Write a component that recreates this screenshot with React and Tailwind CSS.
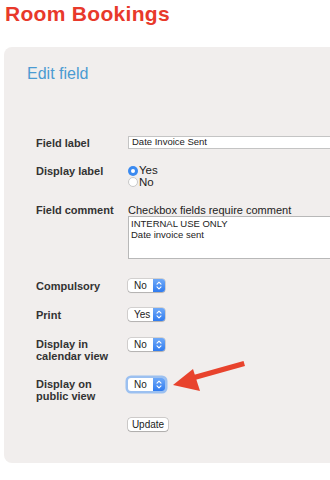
import React from 'react';

function Select({ value, focus }) {
  return (
    <div
      className={`flex h-[13px] w-[37px] overflow-hidden rounded-[3px] bg-white text-[10px] leading-[13px] text-[#222] shadow-[0_0_0_0.5px_rgba(0,0,0,0.25),0_1px_1px_rgba(0,0,0,0.15)] ${
        focus ? 'ring-[2.5px] ring-[#9cc0f0]' : ''
      }`}
    >
      <span className="flex-1 pl-[6px]">{value}</span>
      <span className="flex w-[12px] items-center justify-center bg-gradient-to-b from-[#6fa9f8] to-[#2f7bef]">
        <svg width="6" height="9" viewBox="0 0 6 9" fill="none" stroke="white" strokeWidth="1.1" strokeLinecap="round" strokeLinejoin="round">
          <path d="M1 3.2 L3 1.2 L5 3.2" />
          <path d="M1 5.8 L3 7.8 L5 5.8" />
        </svg>
      </span>
    </div>
  );
}

function Row({ label, children, className }) {
  return (
    <div className={`flex ${className}`}>
      <div className="w-[92px] shrink-0 text-[11px] font-bold leading-[12px] text-[#333]">{label}</div>
      <div className="flex-1">{children}</div>
    </div>
  );
}

export default function App() {
  return (
    <div className="relative h-[480px] w-[330px] overflow-hidden bg-white font-['Liberation_Sans',Arial,sans-serif]">
      <h1 className="pl-[5px] pt-[1px] text-[21px] font-bold leading-[26px] tracking-[0.3px] text-[#e8392b]">Room Bookings</h1>

      <div className="ml-[4px] mt-[20px] h-[416px] w-[345px] rounded-[8px] bg-[#f1eeed] pl-[32px] pt-[18px]">
        <h2 className="-ml-[9px] text-[16px] leading-[18px] text-[#4b9bd2]">Edit field</h2>

        {/* field label */}
        <Row label="Field label" className="mt-[53px] items-center">
          <div className="flex h-[13px] items-center border border-[#c4c4c4] bg-white pl-[3px] text-[9.5px] text-[#222]">
            Date Invoice Sent
          </div>
        </Row>

        {/* display label */}
        <Row label="Display label" className="mt-[16px]">
          <div className="text-[11.5px] leading-[11.6px] text-[#222]">
            <div className="flex items-center gap-[1px]">
              <span className="flex h-[10px] w-[10px] items-center justify-center rounded-full bg-[#3b8af0]">
                <span className="h-[4px] w-[4px] rounded-full bg-white" />
              </span>
              Yes
            </div>
            <div className="flex items-center gap-[1px]">
              <span className="h-[10px] w-[10px] rounded-full border border-[#c8c8c8] bg-white" />
              No
            </div>
          </div>
        </Row>

        {/* field comment */}
        <Row label="Field comment" className="mt-[16px]">
          <div className="text-[11px] leading-[12px] text-[#222]">Checkbox fields require comment</div>
          <div className="h-[43px] border border-[#b8b8b8] bg-white pl-[2px] pt-[1px] text-[9.5px] leading-[11px] text-[#222]">
            <div>INTERNAL USE ONLY</div>
            <div>Date invoice sent</div>
          </div>
        </Row>

        <Row label="Compulsory" className="mt-[20px] items-center">
          <Select value="No" />
        </Row>

        <Row label="Print" className="mt-[16px] items-center">
          <Select value="Yes" />
        </Row>

        <Row label={<>Display in<br />calendar view</>} className="mt-[17px]">
          <Select value="No" />
        </Row>

        <Row label={<>Display on<br />public view</>} className="mt-[16px]">
          <Select value="No" focus />
        </Row>

        <Row label="" className="mt-[16px]">
          <div className="flex h-[13px] w-[40px] items-center justify-center rounded-[3px] bg-white text-[10px] text-[#222] shadow-[0_0_0_0.5px_rgba(0,0,0,0.3),0_1px_1px_rgba(0,0,0,0.15)]">
            Update
          </div>
        </Row>
      </div>

      {/* annotation arrow */}
      <svg className="absolute left-0 top-0" width="330" height="480" viewBox="0 0 330 480">
        <path d="M243.5 361 L245 366 L195 380 L193.5 375 Z" fill="#e8432d" />
        <path d="M173 385 L193 369 L200 391 Z" fill="#e8432d" />
      </svg>
    </div>
  );
}
